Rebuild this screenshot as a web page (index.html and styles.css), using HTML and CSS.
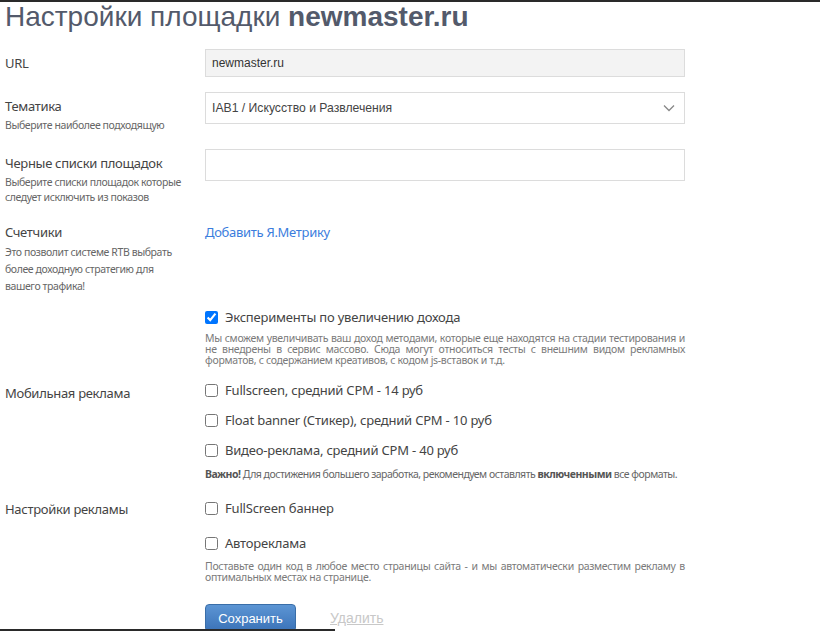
FILE: index.html
```html
<!DOCTYPE html>
<html>
<head>
<meta name="viewport" content="width=device-width, initial-scale=1">
<link rel="stylesheet" href="styles.css">
</head>
<body>
<div class="topline"></div>
<h1 class="title">Настройки площадки <b>newmaster.ru</b></h1>

<div class="form">
  <div class="row row-url">
    <div class="label"><div class="caption">URL</div></div>
    <div class="field"><input type="text" class="input input-ro" value="newmaster.ru" readonly></div>
  </div>

  <div class="row row-theme">
    <div class="label">
      <div class="caption">Тематика</div>
      <div class="hint">Выберите наиболее подходящую</div>
    </div>
    <div class="field">
      <div class="select-wrap">
        <select class="input select">
          <option>IAB1 / Искусство и Развлечения</option>
        </select>
        <svg class="chevron" width="12" height="8" viewBox="0 0 12 8"><path d="M1 1.5 6 6.5 11 1.5" fill="none" stroke="#888" stroke-width="1.3"/></svg>
      </div>
    </div>
  </div>

  <div class="row row-black">
    <div class="label">
      <div class="caption">Черные списки площадок</div>
      <div class="hint">Выберите списки площадок которые следует исключить из показов</div>
    </div>
    <div class="field"><input type="text" class="input input-tall"></div>
  </div>

  <div class="row row-counter">
    <div class="label">
      <div class="caption">Счетчики</div>
      <div class="hint hint-wide">Это позволит системе RTB выбрать более доходную стратегию для вашего трафика!</div>
    </div>
    <div class="field"><a href="#" class="link">Добавить Я.Метрику</a></div>
  </div>

  <div class="row row-exp">
    <div class="label"></div>
    <div class="field">
      <label class="check"><input type="checkbox" checked> Эксперименты по увеличению дохода</label>
      <p class="desc">Мы сможем увеличивать ваш доход методами, которые еще находятся на стадии тестирования и не внедрены в сервис массово. Сюда могут относиться тесты с внешним видом рекламных форматов, с содержанием креативов, с кодом js-вставок и т.д.</p>
    </div>
  </div>

  <div class="row row-mobile">
    <div class="label"><div class="caption caption-low">Мобильная реклама</div></div>
    <div class="field">
      <label class="check"><input type="checkbox"> Fullscreen, средний CPM - 14 руб</label>
      <label class="check"><input type="checkbox"> Float banner (Стикер), средний CPM - 10 руб</label>
      <label class="check"><input type="checkbox"> Видео-реклама, средний CPM - 40 руб</label>
      <p class="note"><b>Важно!</b> Для достижения большего заработка, рекомендуем оставлять <b>включенными</b> все форматы.</p>
    </div>
  </div>

  <div class="row row-ads">
    <div class="label"><div class="caption caption-top">Настройки рекламы</div></div>
    <div class="field">
      <label class="check"><input type="checkbox"> FullScreen баннер</label>
      <label class="check check-gap"><input type="checkbox"> Автореклама</label>
      <p class="desc desc-low">Поставьте один код в любое место страницы сайта - и мы автоматически разместим рекламу в оптимальных местах на странице.</p>
    </div>
  </div>

  <div class="row row-actions">
    <div class="label"></div>
    <div class="field actions">
      <button class="btn">Сохранить</button>
      <a href="#" class="remove">Удалить</a>
    </div>
  </div>
</div>
<div class="bottomline"></div>
</body>
</html>
```

FILE: styles.css
```css
* {box-sizing: border-box;}

body {
  margin: 0;
  background: #fff;
  font-family: "Noto Sans", sans-serif;
  color: #444;
  overflow: hidden;
}

.topline {
  height: 2px;
  background: #2a2a2a;
}

.title {
  margin: 0;
  padding-left: 5px;
  font-family: "Liberation Sans", Arial, sans-serif;
  font-size: 28px;
  font-weight: normal;
  line-height: 30px;
  color: #535a6b;
}

.title b {
  font-weight: bold;
}

.form {
  padding-left: 5px;
  margin-top: 17px;
}

.row {
  display: grid;
  grid-template-columns: 200px 480px;
}

.caption {
  padding-top: 4px;
  font-size: 13px;
  line-height: 20px;
  letter-spacing: -0.3px;
  color: #444;
}

.caption-low {
  padding-top: 3px;
}

.caption-top {
  padding-top: 1px;
}

.hint {
  margin-top: 2px;
  font-size: 10.5px;
  line-height: 15px;
  letter-spacing: -0.4px;
  color: #666;
  width: 185px;
}

.hint-wide {
  line-height: 17px;
  width: 175px;
}

.input {
  display: block;
  width: 480px;
  height: 32px;
  border: 1px solid #dcdcdc;
  border-radius: 0;
  padding: 0 6px;
  font-family: "Liberation Sans", Arial, sans-serif;
  font-size: 12px;
  color: #444;
  background: #fff;
  outline: none;
}

.input-ro {
  height: 28px;
  background: #f3f3f3;
  color: #333;
}

.select-wrap {
  position: relative;
}

.select {
  -webkit-appearance: none;
  appearance: none;
  font-size: 12.2px;
}

.chevron {
  position: absolute;
  right: 10px;
  top: 12px;
}

.row-theme { margin-top: 15px; }
.row-black { margin-top: 16px; }
.row-counter { margin-top: 13px; }
.row-exp { margin-top: 12px; }
.row-mobile { margin-top: 14px; }
.row-ads { margin-top: 16px; }
.row-actions { margin-top: 21px; }

.link {
  display: inline-block;
  padding-top: 4px;
  font-size: 13px;
  line-height: 20px;
  letter-spacing: -0.3px;
  color: #3b7ddd;
  text-decoration: none;
}

.check {
  display: flex;
  align-items: center;
  height: 20px;
  font-size: 13px;
  letter-spacing: -0.2px;
  color: #444;
  margin-bottom: 10px;
}

.check:last-of-type {
  margin-bottom: 0;
}

.check input {
  margin: 0 7px 0 0;
  width: 13px;
  height: 13px;
}

.row-ads .check {
  margin-bottom: 15px;
}

.row-ads .check-gap {
  margin-bottom: 0;
}

.desc {
  margin: 6px 0 0;
  font-size: 10.5px;
  line-height: 11px;
  letter-spacing: -0.3px;
  color: #7a7a7a;
  text-align: justify;
}

.desc-low {
  margin-top: 8px;
}

.note {
  margin: 7px 0 0;
  font-size: 10.5px;
  line-height: 15px;
  letter-spacing: -0.5px;
  color: #666;
  white-space: nowrap;
}

.note b {
  color: #555;
}

.actions {
  display: flex;
  align-items: center;
}

.btn {
  width: 91px;
  height: 28px;
  border: 1px solid #3a6ea8;
  border-radius: 4px;
  background: linear-gradient(#5c95d4, #3b73b8);
  color: #fff;
  font-family: "Liberation Sans", Arial, sans-serif;
  font-size: 13px;
  cursor: pointer;
}

.remove {
  margin-left: 34px;
  font-family: "Liberation Sans", Arial, sans-serif;
  font-size: 14px;
  color: #c8c8c8;
}

.bottomline {
  position: absolute;
  left: 0;
  top: 629px;
  width: 335px;
  height: 2px;
  background: #2a2a2a;
}
```
